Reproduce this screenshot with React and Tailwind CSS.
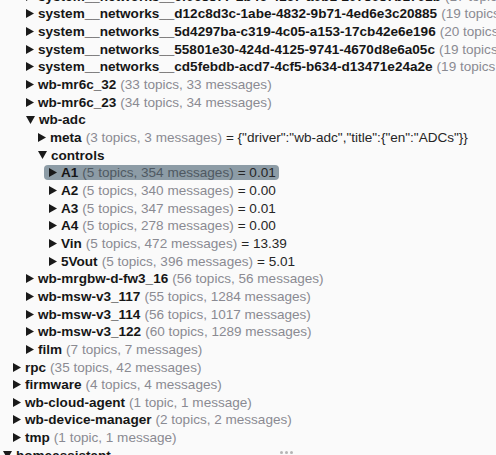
import React from 'react';

const rows = [
  { level: 2, name: 'system__networks__6f068877-2b46-4167-a0b1-2078087b1701b', stats: '(17 topics, 17 messages)' },
  { level: 2, name: 'system__networks__d12c8d3c-1abe-4832-9b71-4ed6e3c20885', stats: '(19 topics, 19 messages)' },
  { level: 2, name: 'system__networks__5d4297ba-c319-4c05-a153-17cb42e6e196', stats: '(20 topics, 20 messages)' },
  { level: 2, name: 'system__networks__55801e30-424d-4125-9741-4670d8e6a05c', stats: '(19 topics, 19 messages)' },
  { level: 2, name: 'system__networks__cd5febdb-acd7-4cf5-b634-d13471e24a2e', stats: '(19 topics, 19 messages)' },
  { level: 2, name: 'wb-mr6c_32', stats: '(33 topics, 33 messages)' },
  { level: 2, name: 'wb-mr6c_23', stats: '(34 topics, 34 messages)' },
  { level: 2, name: 'wb-adc', open: true },
  { level: 3, name: 'meta', stats: '(3 topics, 3 messages)', value: '= {"driver":"wb-adc","title":{"en":"ADCs"}}' },
  { level: 3, name: 'controls', open: true },
  { level: 4, name: 'A1', stats: '(5 topics, 354 messages)', value: '= 0.01', selected: true },
  { level: 4, name: 'A2', stats: '(5 topics, 340 messages)', value: '= 0.00' },
  { level: 4, name: 'A3', stats: '(5 topics, 347 messages)', value: '= 0.01' },
  { level: 4, name: 'A4', stats: '(5 topics, 278 messages)', value: '= 0.00' },
  { level: 4, name: 'Vin', stats: '(5 topics, 472 messages)', value: '= 13.39' },
  { level: 4, name: '5Vout', stats: '(5 topics, 396 messages)', value: '= 5.01' },
  { level: 2, name: 'wb-mrgbw-d-fw3_16', stats: '(56 topics, 56 messages)' },
  { level: 2, name: 'wb-msw-v3_117', stats: '(55 topics, 1284 messages)' },
  { level: 2, name: 'wb-msw-v3_114', stats: '(56 topics, 1017 messages)' },
  { level: 2, name: 'wb-msw-v3_122', stats: '(60 topics, 1289 messages)' },
  { level: 2, name: 'film', stats: '(7 topics, 7 messages)' },
  { level: 1, name: 'rpc', stats: '(35 topics, 42 messages)' },
  { level: 1, name: 'firmware', stats: '(4 topics, 4 messages)' },
  { level: 1, name: 'wb-cloud-agent', stats: '(1 topic, 1 message)' },
  { level: 1, name: 'wb-device-manager', stats: '(2 topics, 2 messages)' },
  { level: 1, name: 'tmp', stats: '(1 topic, 1 message)' },
  { level: 0, name: 'homeassistant', open: true },
];

const indent = ['pl-[3px]', 'pl-[13px]', 'pl-[26px]', 'pl-[38px]', 'pl-[49px]'];

const Arrow = ({ open }) =>
  open ? (
    <svg width="9" height="8" viewBox="0 0 9 8" className="mr-[4px] shrink-0">
      <path d="M0 0 L9 0 L4.5 8 Z" fill="#1a1a1a" />
    </svg>
  ) : (
    <svg width="8" height="9" viewBox="0 0 8 9" className="mr-[4px] shrink-0">
      <path d="M0 0 L8 4.5 L0 9 Z" fill="#1a1a1a" />
    </svg>
  );

const Row = ({ row }) => {
  const inner = (
    <>
      <Arrow open={row.open} />
      <span className="font-bold text-[#161616]">{row.name}</span>
      {row.stats && (
        <span className={row.selected ? 'ml-[4px] text-[#4f5962]' : 'ml-[4px] text-[#8a8a92]'}>{row.stats}</span>
      )}
      {row.value && <span className="ml-[4px] text-[#262626]">{row.value}</span>}
    </>
  );
  return (
    <div className={`flex h-[17.67px] items-center whitespace-nowrap ${indent[row.level]}`}>
      {row.selected ? (
        <span className="-ml-[5px] flex h-[15px] items-center rounded-[4px] bg-[#8d9ca6] pl-[5px] pr-[3px]">{inner}</span>
      ) : (
        inner
      )}
    </div>
  );
};

export default function App() {
  return (
    <div
      className="relative h-[455px] w-[496px] overflow-hidden bg-[#fafafa] text-[13.55px] leading-[15px]"
      style={{ fontFamily: '"Liberation Sans", Arial, sans-serif' }}
    >
      <div className="mt-[-12.6px]">
        {rows.map((row, i) => (
          <Row key={i} row={row} />
        ))}
      </div>
      <div className="absolute left-[280px] top-[451px] flex gap-[2px]">
        <span className="h-[3px] w-[3px] rounded-full bg-[#b5b5b5]" />
        <span className="h-[3px] w-[3px] rounded-full bg-[#b5b5b5]" />
        <span className="h-[3px] w-[3px] rounded-full bg-[#b5b5b5]" />
      </div>
    </div>
  );
}
